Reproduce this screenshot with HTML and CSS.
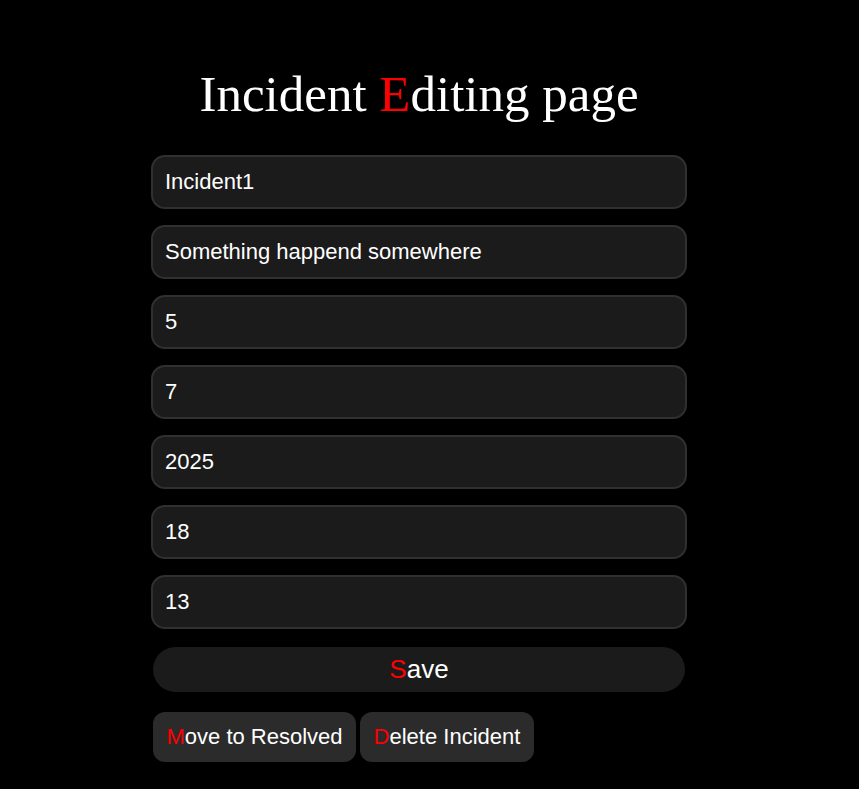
FILE: index.html
```html
<!DOCTYPE html>
<html>
<head>
<meta charset="utf-8">
<link rel="stylesheet" href="styles.css">
</head>
<body>
<div class="page">
  <h1 class="title">Incident <span class="red">E</span>diting page</h1>
  <form class="form">
    <input class="field" type="text" value="Incident1">
    <input class="field" type="text" value="Something happend somewhere">
    <input class="field" type="text" value="5">
    <input class="field" type="text" value="7">
    <input class="field" type="text" value="2025">
    <input class="field" type="text" value="18">
    <input class="field" type="text" value="13">
    <button class="save" type="button"><span class="red">S</span>ave</button>
    <div class="actions">
      <button class="action" type="button"><span class="red">M</span>ove to Resolved</button>
      <button class="action" type="button"><span class="red">D</span>elete Incident</button>
    </div>
  </form>
</div>
</body>
</html>
```
FILE: styles.css
```css
html, body {
  margin: 0;
  background: #000;
}
.page {
  width: 536px;
  margin: 0 0 0 151px;
  padding-top: 66px;
  display: flex;
  flex-direction: column;
  align-items: center;
}
.title {
  margin: 0;
  font-family: "Liberation Serif", "Times New Roman", serif;
  font-weight: normal;
  font-size: 51px;
  line-height: 56px;
  color: #fff;
  white-space: nowrap;
}
.red {
  color: #ff0000;
}
.form {
  width: 100%;
  margin-top: 33px;
  display: flex;
  flex-direction: column;
}
.field {
  box-sizing: border-box;
  width: 100%;
  height: 54px;
  margin: 0 0 16px 0;
  padding: 0 12px;
  background: #1b1b1b;
  border: 2px solid #303030;
  border-radius: 14px;
  color: #fff;
  font-family: "Liberation Sans", Arial, sans-serif;
  font-size: 22px;
  outline: none;
}
.field:last-of-type {
  margin-bottom: 18px;
}
.save {
  box-sizing: border-box;
  width: 532px;
  height: 45px;
  margin: 0 2px;
  padding: 0;
  background: #1b1b1b;
  border: none;
  border-radius: 23px;
  color: #fff;
  font-family: "Liberation Sans", Arial, sans-serif;
  font-size: 26px;
}
.actions {
  margin: 20px 2px 0;
  display: flex;
  gap: 4px;
}
.action {
  height: 50px;
  padding: 0 13.5px;
  background: #2b2b2b;
  border: none;
  border-radius: 12px;
  color: #fff;
  font-family: "Liberation Sans", Arial, sans-serif;
  font-size: 22px;
}
```
